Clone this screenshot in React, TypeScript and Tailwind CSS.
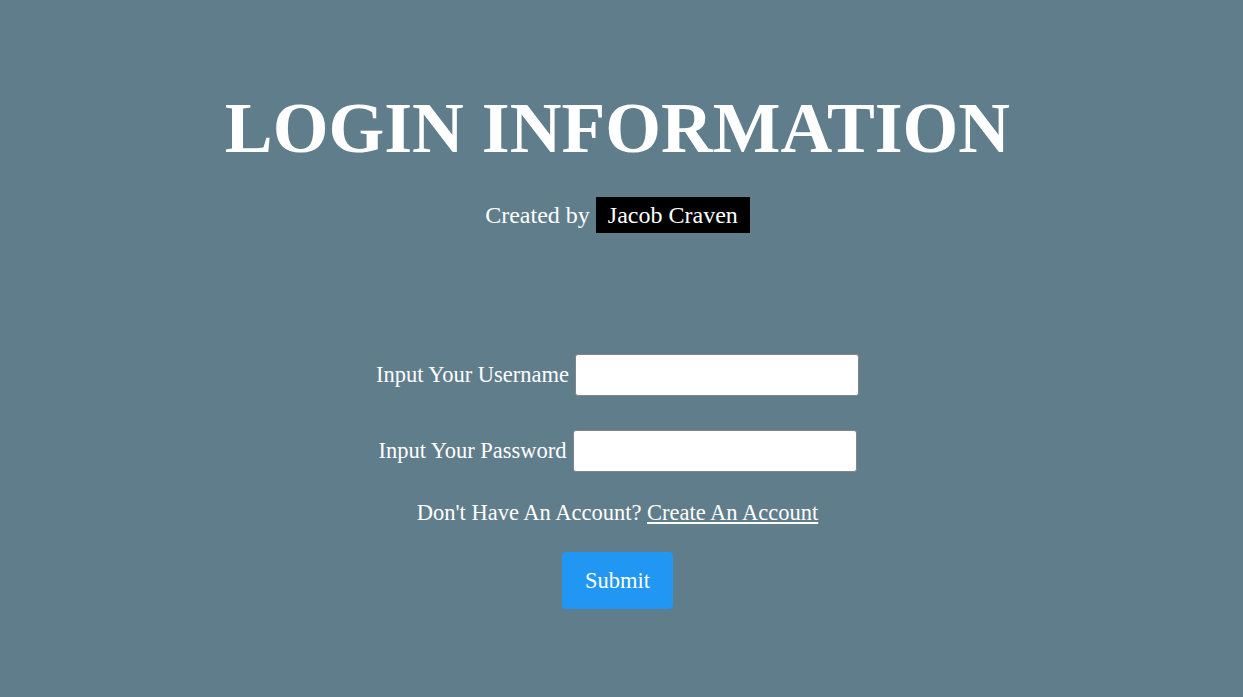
import React from "react";

const App: React.FC = () => {
  return (
    <div
      className="min-h-[697px] w-full bg-[#607d8b] pr-[8px] text-white"
      style={{ fontFamily: '"Liberation Serif", "Times New Roman", serif' }}
    >
      <div className="flex flex-col items-center pt-[92px]">
        <h1 className="text-[71.7px] font-bold leading-[72px]">LOGIN INFORMATION</h1>

        <p className="mt-[33px] flex items-center gap-[6px] text-[24px] leading-[28px]">
          <span>Created by</span>
          <span className="bg-black px-3 py-1">Jacob Craven</span>
        </p>

        <form className="mt-[121px] flex flex-col items-center">
          <div className="flex items-center gap-[6px] text-[22.5px]">
            <label htmlFor="username">Input Your Username</label>
            <input
              id="username"
              type="text"
              className="box-border h-[42px] w-[284px] rounded-[3px] border border-solid border-[#858585] bg-white px-2 text-black outline-none"
            />
          </div>

          <div className="mt-[34px] flex items-center gap-[6px] text-[22.5px]">
            <label htmlFor="password">Input Your Password</label>
            <input
              id="password"
              type="password"
              className="box-border h-[42px] w-[284px] rounded-[3px] border border-solid border-[#858585] bg-white px-2 text-black outline-none"
            />
          </div>

          <p className="mt-[28px] text-[22.5px] leading-[26px]">
            Don't Have An Account?{" "}
            <a href="#" className="underline">
              Create An Account
            </a>
          </p>

          <button
            type="button"
            className="mt-[26px] h-[57px] w-[111px] rounded-[4px] bg-[#2196f3] text-[22.5px] text-white"
          >
            Submit
          </button>
        </form>
      </div>
    </div>
  );
};

export default App;
